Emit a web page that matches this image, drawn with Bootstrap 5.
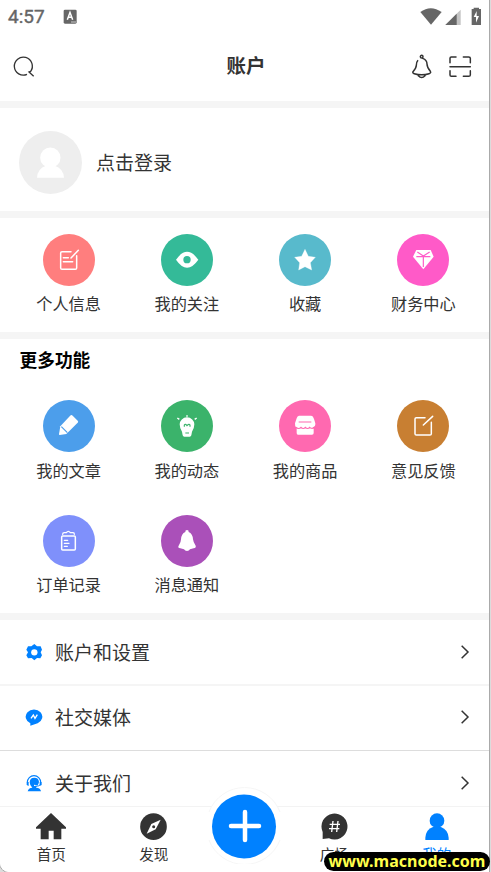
<!DOCTYPE html>
<html lang="zh-CN">
<head>
<meta charset="utf-8">
<meta name="viewport" content="width=device-width, initial-scale=1">
<title>账户</title>
<link href="https://cdn.jsdelivr.net/npm/bootstrap@5.3.0/dist/css/bootstrap.min.css" rel="stylesheet">
<style>
body{background:#dcdcdc;font-family:"Noto Sans CJK SC",sans-serif;color:#333;height:872px;overflow:hidden}
svg{display:block;flex:none}
.phone{width:489px;height:872px;border-bottom-left-radius:9px;overflow:hidden;outline:1px solid #aaa}
.statusbar{height:34px;padding:0 7px 0 8px;font:400 19px/34px Roboto,sans-serif;color:#666;-webkit-text-stroke:.4px #666}
.topbar{height:67px;padding:0 17px 2px 12px}
.topbar .side{width:60px}
.topbar h1{font-size:19.5px;font-weight:700;line-height:28px;margin:0 0 4px 8px}
.gap-bar{height:7px;background:#f5f5f5}
.login{height:103px;padding:5px 19px 0;font-size:19px}
.login svg{margin-right:14px}
.tiles{padding:0 6.500px 0 9.5px}
.tile{font-size:16.2px;line-height:24px;padding:0}
.tile span{margin-top:5.5px}
.group-a{height:114px;padding-top:16px}
.group-a .tile span{margin-top:5px}
.group-b{height:274px}
.group-b h2{font-size:17.7px;font-weight:700;line-height:26px;color:#000;margin:0;padding:7px 0 0 19.5px;height:61.4px}
.group-b .tile{height:114.5px}
.entry{height:66px;padding:0 18px 0 25px;font-size:19px;border-bottom:2px solid #f5f5f5}
.entry .chev{margin-left:auto}
.entry .lead-icon{margin-right:12px}
.entry.second{height:65px;padding-bottom:2px;border-bottom:1px solid #ddd}
.entry.third{height:55px;padding-top:9px;border:0}
.tabbar{height:66px;border-top:1px solid #f3f3f3;padding-top:6px;font-size:14.6px;line-height:20px}
.tab-side{width:102.5px}
.tab-mid{width:78px}
.tab-side span{margin-top:3px}
.tab-on{color:#0081ff}
.plus{top:-20px;left:50%;margin-left:-38.5px}
.site-tag{right:1px;bottom:1px;width:166px;height:19px;border-radius:10px;background:#000;color:#ffff4b;font:700 16px/18px "Noto Sans","Open Sans",sans-serif;white-space:nowrap}
</style>
<script src="https://cdn.jsdelivr.net/npm/bootstrap@5.3.0/dist/js/bootstrap.bundle.min.js"></script>
</head>
<body>
<div class="phone bg-white d-flex flex-column">
  <div class="statusbar d-flex align-items-center flex-shrink-0">
    <span>4:57</span>
    <svg class="ms-3" width="17" height="16" viewBox="0 0 51 48"><rect x="8" y="2" width="39" height="42" rx="4" fill="#666"/><path d="M19 32l8-22 8 22M22 25h11" fill="none" stroke="#fff" stroke-width="4.5"/><path d="M30 39h15" stroke="#fff" stroke-width="2"/></svg>
    <svg class="ms-auto" width="62" height="20" viewBox="0 0 186 60"><path d="M1 15Q32-8 65 15L33 53Z" fill="#666"/><path d="M122 8v46H76Z" fill="#c4c4c4"/><path d="M110 20v34H76Z" fill="#666"/><path d="M155 6h6V2h16v4h6v48h-28Z" fill="#666"/><path d="M170 12l-9 18h7v17l9-20h-7Z" fill="#fff"/></svg>
  </div>
  <header class="topbar d-flex align-items-center justify-content-between flex-shrink-0">
    <div class="side"><svg width="24" height="24" viewBox="0 0 72 72" fill="none" stroke="#333" stroke-width="4"><path d="M45 58A27 27 0 1 1 56 49L51 51L65 64"/></svg></div>
    <h1>账户</h1>
    <div class="side d-flex justify-content-end">
      <svg width="60" height="26" viewBox="0 0 180 78" fill="none" stroke="#333" stroke-width="4.5" stroke-linecap="round" stroke-linejoin="round"><circle cx="29" cy="8" r="4"/><path d="M17 20Q13 24 13 34Q13 42 3 53Q1 57 7 59Q29 66 51 59Q58 57 55 52Q45 40 45 30Q45 18 32 13M19 65Q29 76 39 65M114 26V13Q114 9 118 9H132M154 9H170Q175 9 175 13V26M114 38H175M114 50V63Q114 67 118 67H132M154 67H170Q175 67 175 63V50"/></svg>
    </div>
  </header>
  <div class="gap-bar flex-shrink-0"></div>
  <section class="login d-flex align-items-center flex-shrink-0">
    <svg width="63" height="63" viewBox="0 0 189 189"><circle cx="94.500" cy="94.500" r="94.500" fill="#eee"/><circle cx="94" cy="80" r="30.500" fill="#fff"/><path d="M54 140Q56 112 81 104H107Q133 112 135 140Z" fill="#fff"/></svg>
    <span>点击登录</span>
  </section>
  <div class="gap-bar flex-shrink-0"></div>
  <section class="tiles group-a flex-shrink-0">
    <div class="row g-0">
      <div class="tile col-3 d-flex flex-column align-items-center">
        <svg width="52" height="52" viewBox="0 0 156 156"><circle cx="78" cy="78" r="78" fill="#ff7e7e"/><path d="M84 53H57Q53 53 53 57V102Q53 106 57 106H97Q101 106 101 102V65M84 72L106 49M61 71H76M61 83H89" fill="none" stroke="#fff" stroke-width="4.500" stroke-linecap="round"/></svg><span>个人信息</span></div>
      <div class="tile col-3 d-flex flex-column align-items-center">
        <svg width="52" height="52" viewBox="0 0 156 156"><circle cx="78" cy="78" r="78" fill="#34ba98"/><path d="M45 77Q78 30 112 77Q78 125 45 77Z" fill="#fff"/><circle cx="78" cy="77" r="11" fill="#34ba98"/></svg><span>我的关注</span></div>
      <div class="tile col-3 d-flex flex-column align-items-center">
        <svg width="52" height="52" viewBox="0 0 156 156"><circle cx="78" cy="78" r="78" fill="#58bacc"/><path d="M78 46L88 67L109 70L94 86L98 108L78 98L59 108L62 86L47 70L68 67Z" fill="#fff" stroke="#fff" stroke-linejoin="round"/></svg><span>收藏</span></div>
      <div class="tile col-3 d-flex flex-column align-items-center">
        <svg width="52" height="52" viewBox="0 0 156 156"><circle cx="78" cy="78" r="78" fill="#ff5ac8"/><path d="M58 48H101L110 68L79 106L48 68Z" fill="#fff"/><path d="M61 54L79 66L98 54M58 68H100M79 68V99" fill="none" stroke="#ff5ac8" stroke-width="3.500"/></svg><span>财务中心</span></div>
    </div>
  </section>
  <div class="gap-bar flex-shrink-0"></div>
  <section class="group-b flex-shrink-0">
    <h2>更多功能</h2>
    <div class="tiles row g-0">
      <div class="tile col-3 d-flex flex-column align-items-center">
        <svg width="52" height="52" viewBox="0 0 156 156"><circle cx="78" cy="78" r="78" fill="#4c9eeb"/><path d="M83 46Q86 44 89 47L104 62Q107 65 104 68L70 102L50 105Q48 105 48 103L52 79Z" fill="#fff"/><path d="M55 80L73 98" stroke="#4c9eeb" stroke-width="3.500"/></svg><span>我的文章</span></div>
      <div class="tile col-3 d-flex flex-column align-items-center">
        <svg width="52" height="52" viewBox="0 0 156 156"><circle cx="78" cy="78" r="78" fill="#3bb36b"/><path d="M63 95Q56 84 56 73A22 21 0 0 1 100 73Q100 85 93 95L91 106Q90 110 86 110H70Q66 110 65 106Z" fill="#fff"/><path d="M70 80V75Q73 70 78 77Q84 70 87 75V80M73 99H84" fill="none" stroke="#3bb36b" stroke-width="3.500"/><path d="M49 54l6 4M78 46v4M107 54l-6 4" stroke="#fff" stroke-width="4.500"/></svg><span>我的动态</span></div>
      <div class="tile col-3 d-flex flex-column align-items-center">
        <svg width="52" height="52" viewBox="0 0 156 156"><circle cx="78" cy="78" r="78" fill="#ff69b0"/><path d="M60 47H96Q102 47 105 57L109 70Q110 80 101 82L104 87V99Q104 104 99 104H57Q53 104 53 99V85Q47 80 48 70L53 55Q55 47 60 47Z" fill="#fff"/><path d="M59 66H97M50 82Q59 89 66 82Q73 89 79 82Q86 89 92 82Q99 88 107 82" fill="none" stroke="#ff69b0" stroke-width="3.500"/></svg><span>我的商品</span></div>
      <div class="tile col-3 d-flex flex-column align-items-center">
        <svg width="52" height="52" viewBox="0 0 156 156"><circle cx="78" cy="78" r="78" fill="#c87f32"/><path d="M84 53H58Q54 53 54 57V101Q54 105 58 105H99Q103 105 103 101V67M79 75L107 49" fill="none" stroke="#fff" stroke-width="4.500" stroke-linecap="round"/></svg><span>意见反馈</span></div>
      <div class="tile col-3 d-flex flex-column align-items-center">
        <svg width="52" height="52" viewBox="0 0 156 156"><circle cx="78" cy="78" r="78" fill="#7f90fb"/><rect x="56" y="63" width="41" height="42" rx="3" fill="none" stroke="#fff" stroke-width="4.500"/><path d="M59 58Q59 53 64 53H70Q76 45 82 53H90Q94 53 94 58M64 76H74M64 85H78M64 94H73" fill="none" stroke="#fff" stroke-width="4" stroke-linecap="round"/></svg><span>订单记录</span></div>
      <div class="tile col-3 d-flex flex-column align-items-center">
        <svg width="52" height="52" viewBox="0 0 156 156"><circle cx="78" cy="78" r="78" fill="#aa50b9"/><path d="M73 51Q72 45 78 45Q84 45 83 51Q95 56 96 73Q97 83 104 92Q106 98 98 100L87 103Q84 108 78 108Q72 108 69 103L58 100Q49 98 53 92Q60 83 60 73Q61 56 73 51Z" fill="#fff"/></svg><span>消息通知</span></div>
    </div>
  </section>
  <div class="gap-bar flex-shrink-0"></div>
  <div class="entry d-flex align-items-center flex-shrink-0">
    <svg class="lead-icon" width="18" height="18" viewBox="0 0 54 54"><path d="M28 3L36 10L47 10L51 20L47 28L51 37L46 46L36 45L28 52L20 45L9 46L4 37L9 28L4 20L9 10L19 10Z" fill="#0081ff"/><circle cx="28" cy="28" r="9.500" fill="#fff"/></svg>
    <span>账户和设置</span>
    <svg class="chev" width="12" height="16" viewBox="0 0 36 48"><path d="M8 5L27 24L8 43" fill="none" stroke="#333" stroke-width="4.500"/></svg>
  </div>
  <div class="entry second d-flex align-items-center flex-shrink-0">
    <svg class="lead-icon" width="18" height="18" viewBox="0 0 54 54"><path d="M16 46A25 22 0 1 1 38 46L16 53Z" fill="#0081ff"/><path d="M18 31L25 21L30 31L37 20" fill="none" stroke="#fff" stroke-width="4"/></svg>
    <span>社交媒体</span>
    <svg class="chev" width="12" height="16" viewBox="0 0 36 48"><path d="M8 5L27 24L8 43" fill="none" stroke="#333" stroke-width="4.500"/></svg>
  </div>
  <div class="entry third d-flex align-items-center flex-shrink-0">
    <svg class="lead-icon" width="18" height="18" viewBox="0 0 54 54"><path d="M7 25A20 20 0 0 1 47 25" fill="none" stroke="#0081ff" stroke-width="3.500"/><path d="M5 24h6v12l-6-3ZM44 24h6v9l-6 3ZM14 24Q15 11 28 11Q41 11 42 24Q41 30 38 34L27 32V36L36 37L33 41Q47 42 48 52H8Q10 42 22 41Q14 34 14 24Z" fill="#0081ff"/><path d="M47 31Q44 37 29 37" fill="none" stroke="#0081ff" stroke-width="3"/></svg>
    <span>关于我们</span>
    <svg class="chev" width="12" height="16" viewBox="0 0 36 48"><path d="M8 5L27 24L8 43" fill="none" stroke="#333" stroke-width="4.500"/></svg>
  </div>
  <nav class="tabbar d-flex bg-white flex-shrink-0 position-relative">
    <div class="tab-side d-flex flex-column align-items-center"><svg width="30" height="28" viewBox="0 0 90 84"><path d="M45 0L90 43V47H76V79H53V53H38V79H14V47H0V43Z" fill="#333"/></svg><span>首页</span></div>
    <div class="tab-side d-flex flex-column align-items-center"><svg width="27" height="28" viewBox="0 0 81 84"><circle cx="40.500" cy="41" r="40" fill="#333"/><path d="M62 20L47 49L20 62L34 33Z" fill="#fff"/><circle cx="41" cy="41" r="4.500" fill="#333"/></svg><span>发现</span></div>
    <div class="tab-mid"></div>
    <div class="tab-side d-flex flex-column align-items-center"><svg width="27" height="28" viewBox="0 0 81 84"><path d="M5 57A39 39 0 1 1 24 76L5 78Z" fill="#333"/><path d="M36 24L32 57M51 24L47 57M26 34H57M24 47H55" stroke="#fff" stroke-width="4"/></svg><span>广场</span></div>
    <div class="tab-side d-flex flex-column align-items-center"><svg width="24" height="28" viewBox="0 0 72 84"><circle cx="36" cy="23" r="22" fill="#0081ff"/><path d="M1 81V74Q3 49 24 42H48Q69 50 71 74V81Z" fill="#0081ff"/></svg><span class="tab-on">我的</span></div>
    <div class="plus position-absolute"><svg width="77" height="77" viewBox="0 0 77 77"><circle cx="38.500" cy="39" r="38" fill="#fff"/><path d="M3 25A38 38 0 0 1 74 25M3 53A38 38 0 0 0 74 53" fill="none" stroke="#f6f6f6"/><circle cx="38" cy="39.500" r="32" fill="#0081ff"/><path d="M39 25V53M25 39H53" stroke="#fff" stroke-width="4.500" stroke-linecap="round"/></svg></div>
  </nav>
</div>
<div class="site-tag position-absolute text-center">www.macnode.com</div>
</body>
</html>
